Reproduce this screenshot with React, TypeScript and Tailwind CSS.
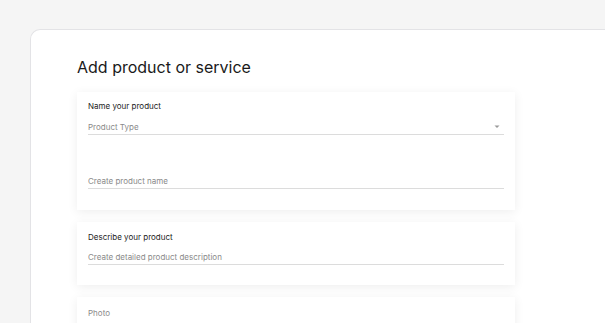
import React from "react";

const font = { fontFamily: "Inter, 'Noto Sans', sans-serif" };

function Field({ placeholder, chevron }: { placeholder: string; chevron?: boolean }) {
  return (
    <div className="flex items-center justify-between border-b border-[#dcdcdc] pb-[2px]">
      <span className="text-[8px] leading-[10px] text-[#8a8a8a]">{placeholder}</span>
      {chevron && (
        <svg width="6" height="4" viewBox="0 0 6 4" className="mr-[4px]">
          <path d="M0.5 0.5 L3 3 L5.5 0.5 Z" fill="#9a9a9a" />
        </svg>
      )}
    </div>
  );
}

export default function App() {
  return (
    <div style={font} className="h-[323px] w-[605px] overflow-hidden bg-[#f5f5f5] pl-[30px] pt-[29px]">
      <div className="h-[400px] rounded-tl-[10px] border-l border-t border-[#e3e3e6] bg-white pl-[46px] pt-[26px]">
        <h1 className="text-[16px] leading-[22px] text-[#1a1a1a]">Add product or service</h1>

        <div className="mt-[14px] w-[438px] bg-white px-[11px] pb-[21px] pt-[9px] shadow-[0_2px_10px_rgba(0,0,0,0.07)]">
          <p className="text-[8px] leading-[10px] text-[#222]">Name your product</p>
          <div className="mt-[11px]">
            <Field placeholder="Product Type" chevron />
          </div>
          <div className="mt-[41px]">
            <Field placeholder="Create product name" />
          </div>
        </div>

        <div className="mt-[12px] w-[438px] bg-white px-[11px] pb-[20px] pt-[10px] shadow-[0_2px_10px_rgba(0,0,0,0.07)]">
          <p className="text-[8px] leading-[10px] text-[#222]">Describe your product</p>
          <div className="mt-[10px]">
            <Field placeholder="Create detailed product description" />
          </div>
        </div>

        <div className="mt-[12px] w-[438px] bg-white px-[11px] pb-[20px] pt-[11px] shadow-[0_2px_10px_rgba(0,0,0,0.07)]">
          <p className="text-[8px] leading-[10px] text-[#8a8a8a]">Photo</p>
        </div>
      </div>
    </div>
  );
}
